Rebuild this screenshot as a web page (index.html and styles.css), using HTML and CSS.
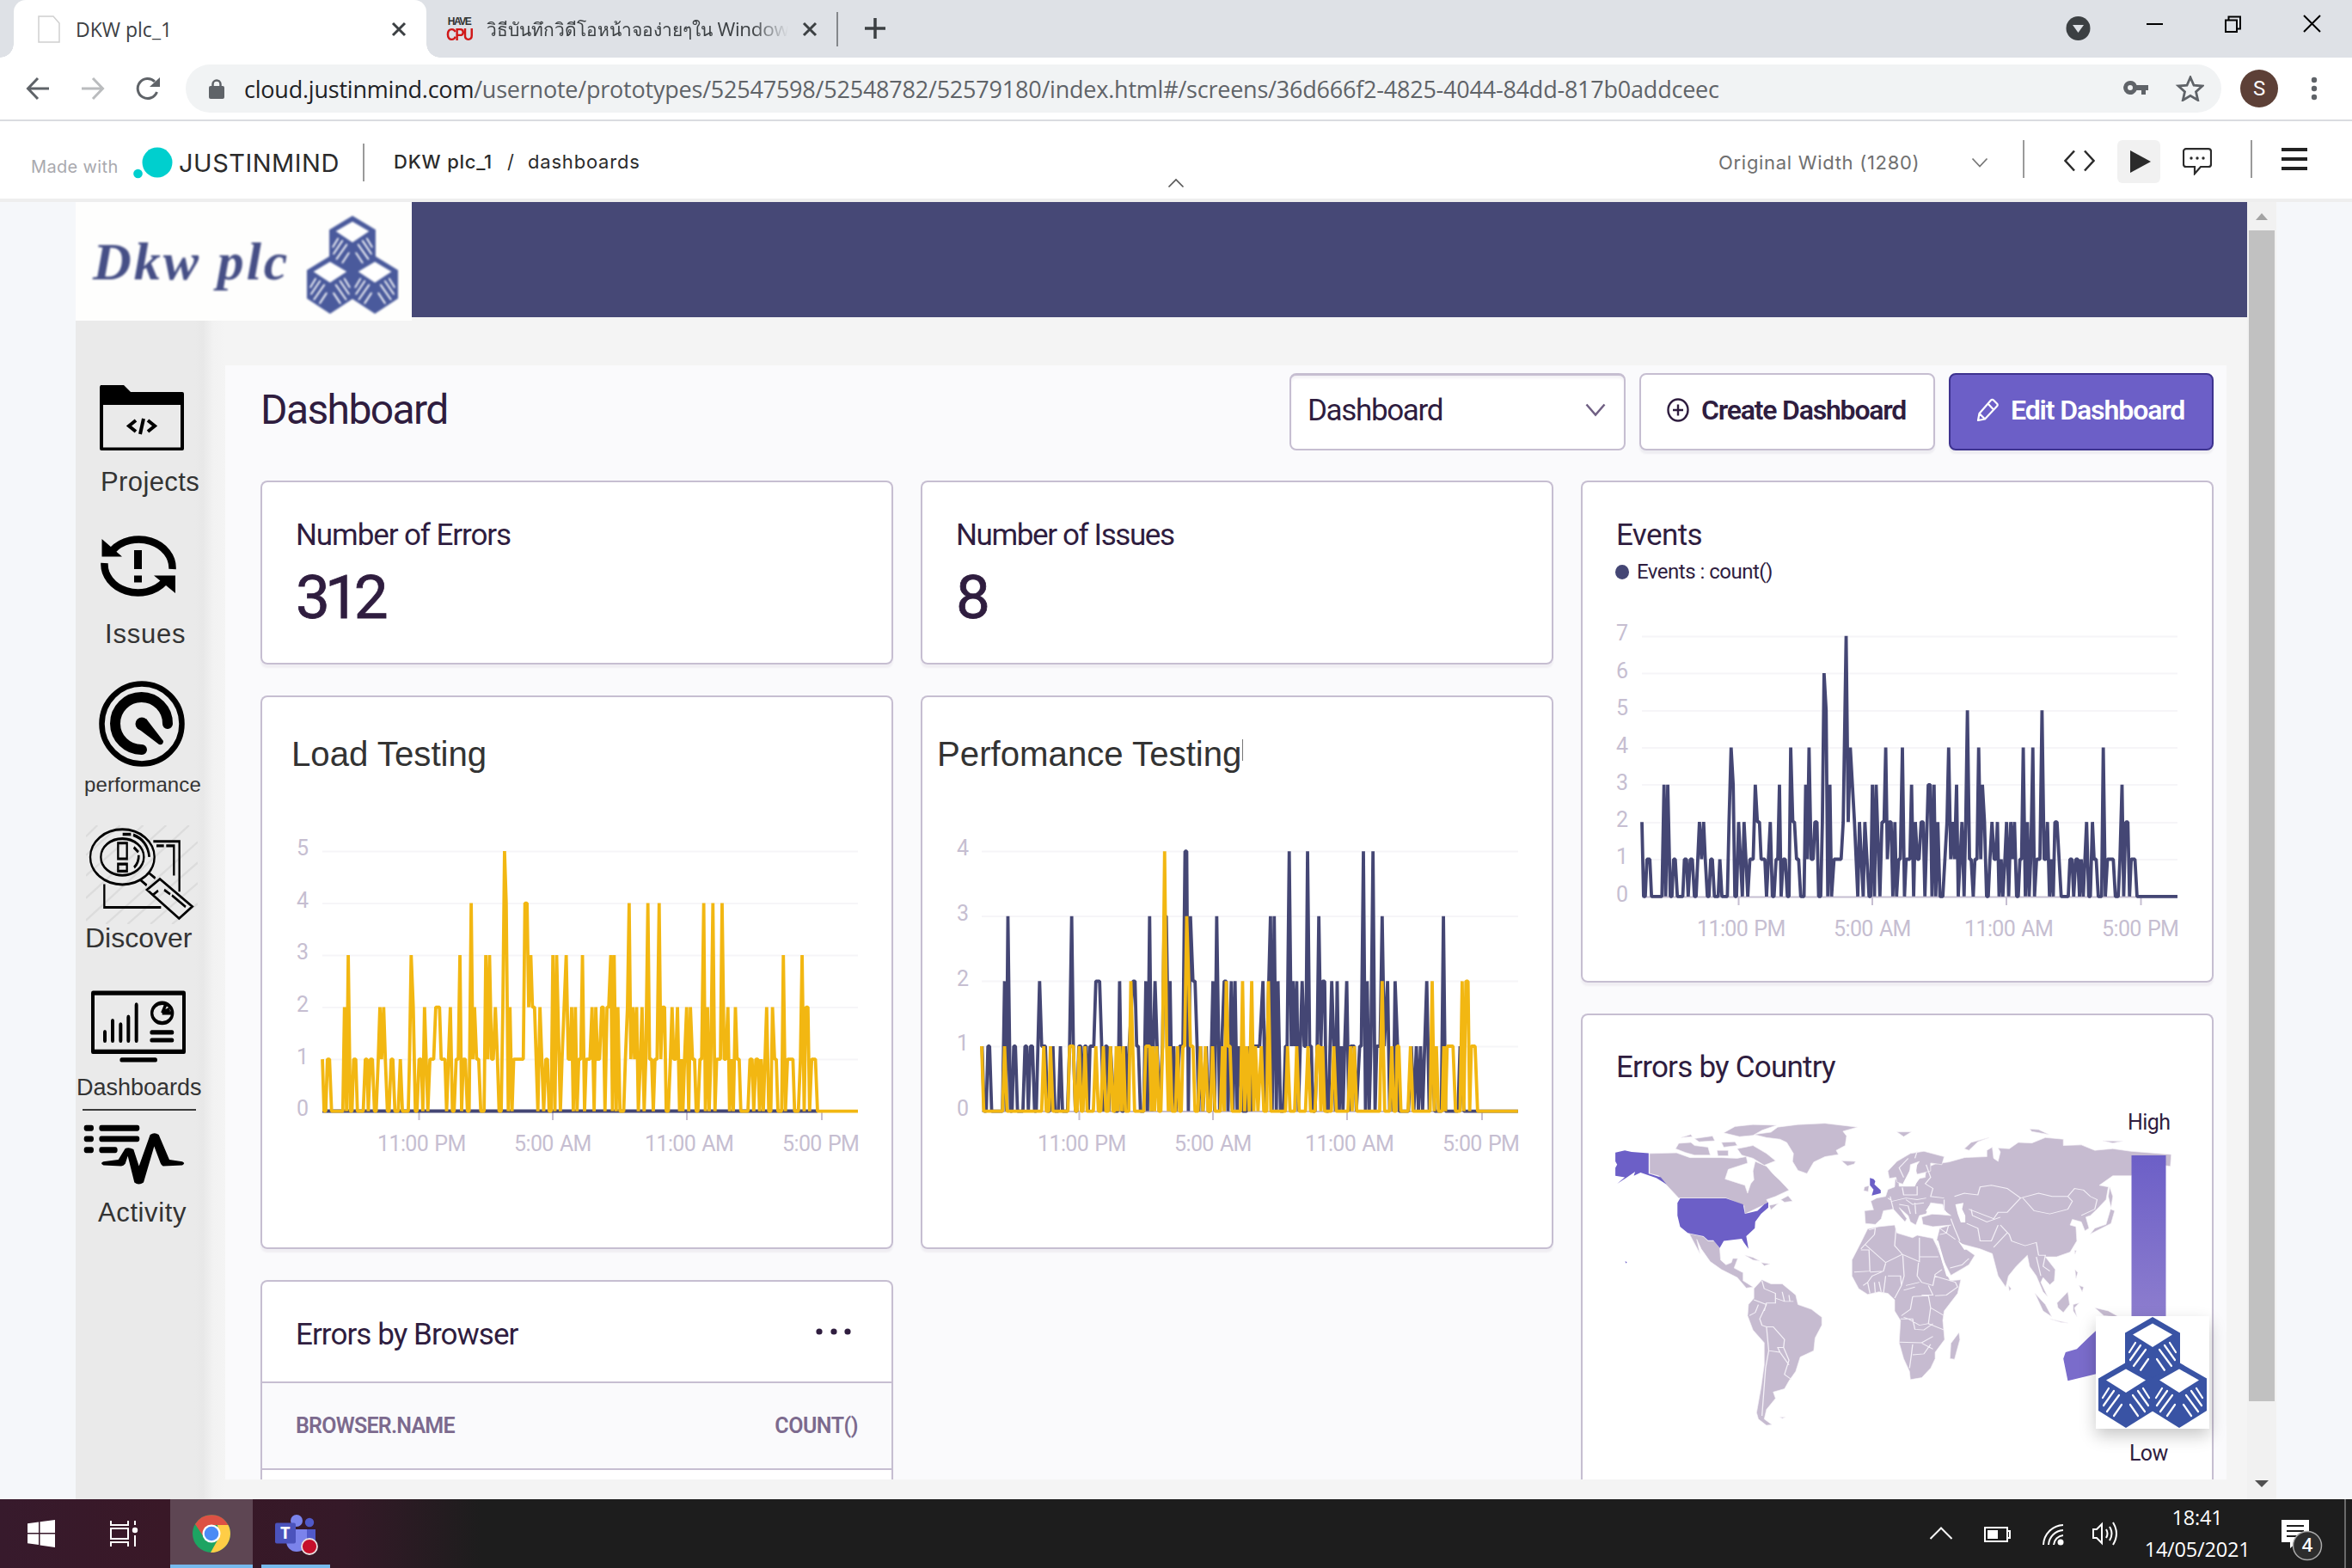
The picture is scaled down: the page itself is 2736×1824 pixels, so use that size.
FILE: index.html
```html
<!DOCTYPE html>
<html lang="en">
<head>
<meta charset="utf-8">
<title>DKW plc_1</title>
<link rel="stylesheet" href="styles.css">
</head>
<body>
<svg class="defs" width="0" height="0">
  <defs>
    <symbol id="cube" viewBox="0 0 64 76" overflow="visible">
      <path d="M32 0 64 18.500V56L32 76 0 56V18.500Z" fill="currentColor"/>
      <path d="M32 7.500 55 20.500 32 35 9 20.500Z" fill="#fff"/>
      <path d="M5 41 12 30M6 50 18 33M10 57 24 38M18 62 27 49M59 41 52 30M58 50 46 33M54 57 40 38M46 62 37 49" stroke="#fff" stroke-width="2.200" stroke-linecap="round"/>
    </symbol>
    <symbol id="cubes" viewBox="0 0 126 129">
      <use href="#cube" x="31" y="0" width="64" height="76"/>
      <use href="#cube" x="0" y="53" width="64" height="76"/>
      <use href="#cube" x="62" y="53" width="64" height="76"/>
    </symbol>
    <linearGradient id="heat" x1="0" y1="0" x2="0" y2="1"><stop offset="0" stop-color="#6c5fc7"/><stop offset="1" stop-color="#a08fd2"/></linearGradient>
  </defs>
</svg>

<header class="tabs">
  <div class="tab tab-active">
    <svg class="tab-doc" width="26" height="32" viewBox="0 0 26 32"><path d="M1 1H18L25 9V31H1Z" fill="#fff" stroke="#d0d0d0" stroke-width="1.500"/></svg>
    <span class="tab-name">DKW plc_1</span>
    <svg class="tab-x" width="18" height="18" viewBox="0 0 18 18"><path d="M2 2 16 16M16 2 2 16" stroke="#3c4043" stroke-width="3"/></svg>
  </div>
  <div class="tab tab-other">
    <div class="fav"><span>HAVE</span><b>CPU</b></div>
    <span class="tab-thai">วิธีบันทึกวิดีโอหน้าจอง่ายๆใน <em>Window</em></span>
    <svg class="tab-x2" width="18" height="18" viewBox="0 0 18 18"><path d="M2 2 16 16M16 2 2 16" stroke="#3c4043" stroke-width="3"/></svg>
  </div>
  <i class="tab-sep"></i>
  <svg class="tab-plus" width="24" height="24" viewBox="0 0 24 24"><path d="M12 0V24M0 12H24" stroke="#3c4043" stroke-width="3.500"/></svg>
  <svg class="win" width="284" height="40" viewBox="0 0 284 40">
    <circle cx="14.500" cy="23" r="14" fill="#3c4043"/><path d="M8 19H21L14.500 28Z" fill="#dee1e6"/>
    <path d="M94 18H113" stroke="#000" stroke-width="2"/>
    <path d="M186 13.500H199V27H186ZM189.500 13V9.500H203V23.500H199" fill="none" stroke="#000" stroke-width="2"/>
    <path d="M277 8 296 27M296 8 277 27" stroke="#000" stroke-width="2"/>
  </svg>
</header>

<nav class="toolbar">
  <svg class="nav-icons" width="156" height="30" viewBox="0 0 156 30">
    <path d="M27 15H3M14 3 2.500 15 14 27" fill="none" stroke="#5f6368" stroke-width="3"/>
    <path d="M65 15H89M78 3 89.500 15 78 27" fill="none" stroke="#babcbe" stroke-width="3"/>
    <path d="M150 7A11.500 11.500 0 1 0 152.500 19" fill="none" stroke="#5f6368" stroke-width="3"/><path d="M156 2V13H144Z" fill="#5f6368"/>
  </svg>
  <div class="omnibox">
    <svg width="18" height="23" viewBox="0 0 18 23"><rect y="8" width="18" height="15" rx="2" fill="#5f6368"/><path d="M4.500 9V6a4.500 4.500 0 0 1 9 0V9" fill="none" stroke="#5f6368" stroke-width="2.500"/></svg>
    <span class="url"><b>cloud.justinmind.com</b>/usernote/prototypes/52547598/52548782/52579180/index.html#/screens/36d666f2-4825-4044-84dd-817b0addceec</span>
    <svg class="omni-actions" width="94" height="30" viewBox="0 0 94 30">
      <path d="M8 6A8 8 0 1 0 15.500 17H21V22H26V17H29V11H15.500A8 8 0 0 0 8 6ZM8 11A3 3 0 1 1 8 17A3 3 0 1 1 8 11Z" fill="#5f6368" fill-rule="evenodd"/>
      <path d="M78 2 82 11.200 92 12 84.500 18.800 86.700 28.500 78 23.300 69.300 28.500 71.500 18.800 64 12 74 11.200Z" fill="none" stroke="#5f6368" stroke-width="2.800"/>
    </svg>
  </div>
  <span class="avatar">S</span>
  <svg class="kebab" width="8" height="28" viewBox="0 0 8 28"><g fill="#5f6368"><circle cx="4" cy="4" r="3.200"/><circle cx="4" cy="14" r="3.200"/><circle cx="4" cy="24" r="3.200"/></g></svg>
</nav>

<div class="jm">
  <span class="made">Made with</span>
  <svg class="jm-dots" width="46" height="38" viewBox="0 0 46 38"><circle cx="28" cy="18" r="17.500" fill="#00cfce"/><circle cx="5.500" cy="31" r="5.300" fill="#00cfce"/></svg>
  <span class="jm-name">JUSTINMIND</span>
  <i class="rule rule-a"></i>
  <span class="crumb"><b>DKW plc_1</b></span>
  <span class="slash">/</span>
  <span class="crumb2">dashboards</span>
  <svg class="collapse" width="20" height="12" viewBox="0 0 20 12"><path d="M1.500 10.500 10 2 18.500 10.500" fill="none" stroke="#555" stroke-width="1.600"/></svg>
  <span class="width-pick">Original Width (1280)</span>
  <svg class="width-chev" width="20" height="12" viewBox="0 0 20 12"><path d="M1.500 1.500 10 10.500 18.500 1.500" fill="none" stroke="#777" stroke-width="1.800"/></svg>
  <i class="rule rule-b"></i>
  <svg class="code" width="36" height="26" viewBox="0 0 36 26"><path d="M12 1.500 1.500 13 12 24.500M24 1.500 34.500 13 24 24.500" fill="none" stroke="#2b2b2b" stroke-width="2.500"/></svg>
  <span class="play"><svg width="24" height="26" viewBox="0 0 24 26"><path d="M0 0 24 13 0 26Z" fill="#2b2b2b"/></svg></span>
  <svg class="comment" width="34" height="32" viewBox="0 0 34 32"><path d="M4 1.200H30a3 3 0 0 1 3 3V19a3 3 0 0 1-3 3H21L14 30V22H4a3 3 0 0 1-3-3V4.200a3 3 0 0 1 3-3Z" fill="none" stroke="#2b2b2b" stroke-width="2.200"/><g fill="#2b2b2b"><circle cx="10" cy="12" r="1.700"/><circle cx="17" cy="12" r="1.700"/><circle cx="24" cy="12" r="1.700"/></g></svg>
  <i class="rule rule-c"></i>
  <svg class="menu" width="30" height="26" viewBox="0 0 30 26"><path d="M0 2H30M0 13H30M0 24H30" stroke="#222" stroke-width="4"/></svg>
</div>

<main class="stage">
  <div class="app">
    <div class="banner">
      <div class="logo"><span>Dkw plc</span><svg width="106" height="114" preserveAspectRatio="none" viewBox="0 0 126 129"><use href="#cubes" width="126" height="129"/></svg></div>
      <div class="bar"></div>
    </div>
    <div class="body">
      <aside class="side">
        <svg class="i-projects" width="98" height="76" viewBox="0 0 98 76"><path d="M1 0H28L36 8H96q2 0 2 2V74q0 2-2 2H2q-2 0-2-2V2ZM4 23V72.500H94V23Z" fill-rule="evenodd"/><path d="M42 41 34 47.500 42 54M56 41 64 47.500 56 54" fill="none" stroke="#000" stroke-width="4"/><path d="M51 39 47 57" stroke="#000" stroke-width="4"/></svg>
        <span class="lb lb-projects">Projects</span>
        <svg class="i-issues" width="88" height="75" viewBox="0 0 88 75"><path d="M14 19A39 33 0 0 1 83.500 41" fill="none" stroke="#000" stroke-width="8.500"/><path d="M4.500 34A39 33 0 0 0 74 56" fill="none" stroke="#000" stroke-width="8.500"/><path d="M1.500 6V26.500H25ZM87 69V48.500H62ZM39 19H48V41H39ZM39 48.500H48V56.500H39Z"/></svg>
        <span class="lb lb-issues">Issues</span>
        <svg class="i-perf" width="102" height="100" viewBox="0 0 102 100"><circle cx="51" cy="50" r="46.500" fill="none" stroke="#000" stroke-width="6.500"/><path d="M81 50A30.500 30.500 0 1 0 51 80" fill="none" stroke="#000" stroke-width="12" stroke-linecap="round"/><circle cx="51" cy="50" r="7.500"/><path d="M56 44 76 70Q76 75 71 74L46 55Z"/></svg>
        <span class="lb lb-perf">performance</span>
        <svg class="i-disc" width="130" height="115" viewBox="120 415 390 265" preserveAspectRatio="none">
          <g stroke="#dcdcdc" stroke-width="6"><path d="M120 445 160 415M120 495 240 415M120 550 320 415M120 610 400 415M120 670 480 415M190 680 510 460M265 680 510 515M345 680 510 570M420 680 510 625"/></g>
          <g fill="none" stroke="#000" stroke-width="7"><ellipse cx="247" cy="500" rx="112" ry="74"/><ellipse cx="247" cy="500" rx="75" ry="49"/><path d="M355 458H446V593M427 550V470H400M366 470H392M184 573V635H382M232 463H263V505H232ZM232 519H263V538H232ZM378 559 491 633 445 665 333 588ZM337 541 362 557M308 560 332 576M352 603 372 590M420 603 468 634M393 588 414 600" /><path d="M285 441Q335 455 341 500M248 439H277M304 495Q305 515 288 528M287 474 303 487" stroke-width="8"/></g>
        </svg>
        <span class="lb lb-disc">Discover</span>
        <svg class="i-dash" width="110" height="84" viewBox="138 858 330 194" preserveAspectRatio="none">
          <g fill="none" stroke="#000" stroke-width="10" stroke-linejoin="round"><rect x="144" y="865" width="318" height="158" stroke-width="12"/><path d="M186 970V993M213 940V993M241 950V993M268 930V993M296 897V993M349 971H421M349 992H421M244 1045H363" stroke-width="12" stroke-linecap="round"/><ellipse cx="386" cy="919" rx="36" ry="27"/><path d="M386 919 398 897M386 919H418M386 919 412 908"/></g>
        </svg>
        <span class="lb lb-dash">Dashboards</span>
        <i class="side-line"></i>
        <svg class="i-act" width="118" height="70" viewBox="110 1218 354 162" preserveAspectRatio="none">
          <path d="M120 1228H138M120 1257H138M120 1287H138M173 1228H298M173 1257H298M173 1287H221" fill="none" stroke="#000" stroke-linecap="round" stroke-width="16"/>
          <path d="M180 1318 232 1313 256 1283Q268 1278 285 1285L304 1330 343 1246Q358 1237 373 1246L410 1313 455 1318Q468 1323 455 1328L388 1330Q382 1328 379 1322L357 1277 320 1374Q303 1384 288 1374L265 1303 256 1324Q250 1330 242 1330L180 1328Q166 1323 180 1318Z"/>
        </svg>
        <span class="lb lb-act">Activity</span>
      </aside>

      <section class="board">
        <div class="board-head">
          <h1>Dashboard</h1>
          <div class="select"><span>Dashboard</span><svg width="24" height="16" viewBox="0 0 24 16"><path d="M1.500 1.500 12 13.500 22.500 1.500" fill="none" stroke="#6f5f83" stroke-width="2.500"/></svg></div>
          <div class="btn btn-create"><svg width="26" height="28" viewBox="0 0 26 28"><ellipse cx="13" cy="14" rx="11.500" ry="12.500" fill="none" stroke="#2f1d3f" stroke-width="2.400"/><path d="M13 7.500V20.500M7 14H19" stroke="#2f1d3f" stroke-width="2.400"/></svg><span>Create Dashboard</span></div>
          <div class="btn btn-edit"><svg width="26" height="28" viewBox="0 0 26 28"><path d="M2 26 3.500 18 17 2.500Q18.500 1 20 2.500L24 6.500Q25.500 8 24 9.500L10 24.500ZM13.500 6.500 20 13.500M3.500 18 10 24.500" fill="none" stroke="#fff" stroke-width="2.200" stroke-linejoin="round"/></svg><span>Edit Dashboard</span></div>
        </div>
        <div class="cols">
          <div class="col">
            <article class="card card-num"><h2 class="t-errors">Number of Errors</h2><p class="big">312</p></article>
            <article class="card card-chart"><h3 class="t-load">Load Testing</h3>
              <svg class="chart" width="736" height="400">
                <path class="grid" d="M72 30.500H695M72 91H695M72 151.500H695M72 212H695M72 272.500H695"/>
                <path class="axis" d="M72 333H695M184.500 334V343M340 334V343M496 334V343M653 334V343"/>
                <g class="ylab"><text x="56" y="35">5</text><text x="56" y="96">4</text><text x="56" y="156">3</text><text x="56" y="217">2</text><text x="56" y="278">1</text><text x="56" y="338">0</text></g>
                <g class="xlab"><text x="136" y="379">11:00 PM</text><text x="295" y="379">5:00 AM</text><text x="447" y="379">11:00 AM</text><text x="607" y="379">5:00 PM</text></g>
                <path d="M72 332.600H648" stroke="#444674" stroke-width="4"/>
                <g transform="matrix(.4848 0 0 -60.500 -3.100 332.600)"><polyline class="line yellow" points="155,1 159,0 163,0 167,1 172,1 177,0 204,0 208,2 213,0 217,3 222,0 226,0 230,1 235,1 239,0 253,0 258,1 262,1 265,0 270,1 275,1 280,0 284,0 289,1 293,2 297,1 302,2 306,1 311,0 315,0 320,1 324,1 329,0 337,0 342,1 347,0 361,0 364,1 368,3 373,2 378,0 382,0 387,1 392,1 396,0 400,2 408,0 413,1 422,1 427,2 436,2 440,1 449,1 453,0 462,2 467,0 471,0 476,1 481,1 485,3 489,0 493,1 498,1 503,0 507,0 512,4 516,1 520,2 525,1 530,1 535,0 543,0 547,3 552,1 556,3 561,1 565,1 570,2 575,1 579,0 584,0 588,2 592,5 596,4 601,0 605,2 610,0 614,1 637,1 641,4 646,4 650,2 655,3 659,2 664,2 668,1 672,0 677,2 686,0 691,1 695,1 699,0 704,0 708,3 713,0 717,3 726,0 730,1 735,2 740,3 745,1 749,1 753,2 757,0 762,2 766,0 770,1 775,1 779,3 784,0 788,1 797,1 802,2 807,0 811,2 815,1 820,1 825,2 829,2 833,0 838,2 842,2 847,3 851,0 855,3 860,0 864,2 869,0 878,0 882,1 887,2 891,4 895,1 900,2 904,1 909,2 913,0 918,1 922,2 927,0 931,1 936,4 940,1 945,1 949,0 953,1 958,1 963,4 967,1 971,2 976,2 980,0 985,0 990,1 994,2 998,1 1003,1 1007,2 1012,0 1016,1 1020,0 1024,1 1029,2 1034,0 1038,2 1043,1 1048,1 1052,0 1056,0 1061,1 1065,1 1070,4 1074,0 1079,2 1083,0 1087,1 1092,4 1097,0 1101,1 1110,1 1114,4 1119,1 1123,1 1128,2 1132,0 1137,1 1141,0 1146,2 1150,1 1155,1 1159,0 1176,0 1181,1 1186,1 1190,0 1195,1 1200,1 1204,0 1208,1 1213,0 1217,1 1221,2 1226,0 1231,0 1235,2 1240,1 1244,1 1248,0 1257,0 1261,3 1266,0 1271,1 1284,1 1288,0 1297,0 1302,1 1306,3 1311,0 1315,2 1320,2 1324,0 1329,1 1338,1 1343,0 1440,0"/></g>
              </svg>
            </article>
            <article class="card card-browser">
              <div class="browser-head"><h2 class="t-browser">Errors by Browser</h2><svg width="42" height="8" viewBox="0 0 42 8"><g fill="#2f1d3f"><circle cx="4" cy="4" r="3.600"/><circle cx="21" cy="4" r="3.600"/><circle cx="37" cy="4" r="3.600"/></g></svg></div>
              <div class="browser-cols"><span class="c-name">BROWSER.NAME</span><span class="c-count">COUNT()</span></div>
              <div class="browser-row"></div>
            </article>
          </div>
          <div class="col">
            <article class="card card-num"><h2 class="t-issues">Number of Issues</h2><p class="big">8</p></article>
            <article class="card card-chart"><h3 class="t-perf">Perfomance Testing<i></i></h3>
              <svg class="chart" width="736" height="400">
                <path class="grid" d="M71 30.500H695M71 106H695M71 181.500H695M71 257.500H695"/>
                <path class="axis" d="M71 333H695M184.500 334V343M340 334V343M496 334V343M653 334V343"/>
                <g class="ylab"><text x="56" y="35">4</text><text x="56" y="111">3</text><text x="56" y="187">2</text><text x="56" y="262">1</text><text x="56" y="338">0</text></g>
                <g class="xlab"><text x="136" y="379">11:00 PM</text><text x="295" y="379">5:00 AM</text><text x="447" y="379">11:00 AM</text><text x="607" y="379">5:00 PM</text></g>
                <g transform="matrix(.4848 0 0 -75.600 -11 332.600)">
                  <polyline class="line navy" points="170,1 175,0 180,0 184,1 188,1 193,0 219,0 224,2 228,0 232,3 238,0 242,0 246,1 250,1 255,0 268,0 273,1 277,1 281,0 286,1 291,1 296,0 300,0 304,1 308,2 313,1 322,1 327,0 332,0 340,1 345,0 353,0 358,1 363,0 375,0 380,1 385,3 389,1 394,0 398,0 402,1 407,1 411,0 416,1 420,1 425,0 429,1 438,1 443,2 452,2 457,1 461,0 466,1 470,1 474,0 478,1 487,0 496,0 500,2 505,0 510,0 514,1 518,0 523,1 532,2 537,2 541,1 545,1 550,0 558,0 563,2 567,0 572,3 577,0 581,1 585,2 590,1 595,0 603,1 607,3 612,3 617,1 621,2 626,0 630,1 635,0 644,1 652,1 657,4 661,4 665,0 670,3 676,2 681,2 686,1 690,0 694,1 700,0 708,1 713,0 717,0 724,2 728,0 733,3 740,0 745,1 751,2 756,2 760,0 768,2 772,0 777,2 782,0 786,1 795,0 805,0 810,1 815,0 819,1 826,1 836,1 844,2 850,0 862,3 866,0 871,3 876,0 880,2 886,0 893,0 898,1 902,1 907,4 912,1 916,2 920,1 925,2 929,0 938,2 943,1 947,1 951,4 956,1 960,1 964,0 969,0 974,1 978,3 983,1 987,2 992,2 996,0 1001,0 1005,1 1009,2 1014,1 1018,0 1022,2 1027,0 1032,1 1036,0 1040,1 1045,2 1050,0 1054,1 1063,1 1068,0 1076,1 1080,1 1085,4 1090,0 1094,2 1099,0 1103,1 1108,4 1113,0 1117,1 1125,1 1130,3 1135,1 1143,2 1148,0 1152,1 1157,0 1161,2 1167,1 1171,0 1193,0 1200,1 1206,0 1212,1 1217,0 1222,1 1227,0 1232,1 1237,2 1243,0 1250,1 1256,0 1272,0 1277,3 1282,0 1312,0 1317,1 1326,0 1456,0"/>
                  <polyline class="line yellow" points="169,1 174,0 219,0 224,1 230,0 313,0 318,1 324,0 330,0 334,1 340,0 376,0 380,1 389,1 394,0 398,0 403,1 408,0 412,0 417,1 422,0 437,0 443,1 449,0 455,0 461,1 467,0 473,0 478,1 484,0 488,0 492,1 496,0 500,1 505,0 509,1 514,0 522,0 527,2 536,0 558,0 563,1 572,1 576,0 580,1 584,0 589,1 594,0 599,0 603,1 608,4 613,1 617,0 621,1 626,0 634,0 639,1 644,0 648,0 652,1 656,1 661,3 666,2 670,1 676,1 681,0 688,0 694,1 700,0 706,1 712,0 718,0 723,1 729,0 742,0 747,1 751,0 756,2 760,1 765,1 770,0 790,0 795,2 800,0 805,1 811,0 817,2 822,0 826,1 832,0 840,1 846,0 853,0 857,2 863,0 898,0 903,1 909,0 920,0 925,1 931,0 946,0 952,1 958,0 969,0 974,1 979,1 983,0 987,1 992,0 1008,0 1014,1 1020,0 1048,0 1054,1 1058,0 1063,1 1069,0 1124,0 1130,2 1136,0 1148,0 1153,1 1158,0 1163,0 1166,1 1170,1 1175,0 1192,0 1198,1 1204,0 1245,0 1250,2 1255,0 1260,1 1265,0 1274,0 1278,1 1282,0 1286,1 1300,1 1306,0 1317,0 1322,2 1326,0 1331,2 1336,2 1340,0 1344,1 1353,1 1359,0 1456,0"/>
                </g>
              </svg>
            </article>
          </div>
          <div class="col">
            <article class="card card-events"><h2 class="t-events">Events</h2>
              <p class="legend"><i></i><span>Events : count()</span></p>
              <svg class="chart" width="736" height="400">
                <path class="grid" d="M71 30.500H694M71 73.500H694M71 117H694M71 160H694M71 203H694M71 247H694M71 290H694"/>
                <path class="axis" d="M71 333.500H694M183.500 334V343M339 334V343M495 334V343M651.500 334V343"/>
                <g class="ylab"><text x="55" y="35">7</text><text x="55" y="79">6</text><text x="55" y="122">5</text><text x="55" y="166">4</text><text x="55" y="209">3</text><text x="55" y="252">2</text><text x="55" y="295">1</text><text x="55" y="339">0</text></g>
                <g class="xlab"><text x="135" y="379">11:00 PM</text><text x="294" y="379">5:00 AM</text><text x="446" y="379">11:00 AM</text><text x="606" y="379">5:00 PM</text></g>
                <g transform="matrix(.4848 0 0 -43.300 -9 332.800)"><polyline class="line navy" points="165,2 169,0 173,0 177,1 184,1 188,0 213,0 218,3 222,0 227,3 233,0 237,0 241,1 245,1 250,0 263,0 267,1 272,1 276,0 281,1 286,1 291,0 295,0 299,1 303,2 308,1 313,2 317,1 322,0 326,0 330,1 334,1 339,0 348,0 352,1 357,0 370,0 374,2 379,4 384,3 388,0 392,0 397,2 406,0 410,2 419,0 424,1 432,1 437,3 442,2 447,2 451,1 460,1 464,0 473,2 478,0 482,0 487,1 491,1 495,3 499,0 504,1 509,1 514,0 518,0 522,4 527,2 531,2 536,1 541,1 546,0 554,0 558,3 562,1 566,4 571,1 576,1 580,2 585,2 589,0 594,0 598,2 602,6 607,5 611,0 616,3 620,0 626,1 643,1 648,2 655,7 660,2 665,4 670,3 675,2 683,0 687,2 696,0 700,2 705,1 710,0 714,0 718,3 723,0 727,3 736,0 741,2 746,2 750,4 754,1 758,2 763,2 767,0 772,2 776,0 781,1 785,1 790,4 795,0 799,1 808,1 812,3 817,0 821,2 826,1 830,1 835,2 840,2 844,0 852,3 857,3 861,0 866,3 870,0 875,2 880,0 887,0 892,1 897,2 901,4 906,1 911,2 915,1 920,3 924,0 933,2 938,0 942,2 946,5 951,1 955,1 960,0 964,1 969,1 973,4 978,1 982,3 987,2 992,0 996,0 1000,1 1005,2 1010,1 1014,1 1018,2 1022,0 1027,1 1031,0 1036,1 1040,2 1045,0 1050,2 1054,1 1059,2 1064,0 1068,0 1072,1 1076,1 1080,4 1085,0 1090,2 1094,0 1098,1 1103,4 1107,0 1112,1 1120,1 1125,5 1130,1 1134,1 1138,2 1143,0 1148,1 1152,0 1156,2 1161,2 1166,1 1171,0 1188,0 1192,1 1197,1 1201,0 1206,1 1211,1 1215,0 1219,1 1224,0 1228,1 1232,2 1237,0 1241,0 1246,2 1250,1 1255,1 1260,0 1268,0 1272,4 1277,0 1282,1 1296,1 1301,0 1308,0 1312,1 1317,3 1321,0 1326,2 1331,2 1335,0 1339,1 1348,1 1353,0 1450,0"/></g>
              </svg>
            </article>
            <article class="card card-map"><h2 class="t-country">Errors by Country</h2>
              <svg class="map" width="736" height="459">
                <svg x="38" y="41" width="654" height="362.500" viewBox="90 360 1250 980" preserveAspectRatio="none">
                  <g fill="#c6bbd0" stroke="#f6f3f8" stroke-width="1.500">
                    <path d="M402 405 440 398 455 382 500 374 560 370 632 382 600 395 608 410 605 440 585 455 590 468 560 475 535 492 520 528 500 518 488 490 490 465 475 430 460 420 430 415Z"/>
                    <path d="M170 465 230 463 260 478 330 478 365 480 385 475 388 495 345 515 338 545 360 555 382 565 388 590 395 560 402 548 400 520 405 490 430 505 445 530 460 550 480 580 450 600 430 610 434 620 382 655 380 630 340 605 235 605 205 560 190 535 170 528Z"/>
                    <path d="M228 450 235 433 262 430 270 440 300 445 305 470 270 470 250 462ZM270 418 310 410 315 425 280 428ZM335 400 360 380 400 374 452 376 420 392 400 408 370 412ZM330 430 360 428 365 440 335 445ZM365 450 400 440 430 465 450 488 425 502 400 480 375 470ZM320 455 345 455 345 472 322 472ZM240 415 262 405 265 412ZM462 610 478 598 488 615 470 618ZM436 628 456 622 440 642Z"/>
                    <path d="M258 716 290 726 300 740 314 740 326 762 328 800 340 815 352 808 355 795 366 795 358 825 378 840 378 865 400 885 385 888 365 855 330 830 305 805 285 765 275 735 282 780Z"/>
                    <path d="M382 785 400 792 415 803 400 800ZM418 808 438 812 425 818Z"/>
                    <path d="M420 862 440 875 465 875 495 910 500 940 530 955 553 980 553 1005 538 1045 535 1085 505 1105 495 1150 480 1180 470 1205 445 1215 450 1235 430 1270 425 1300 442 1318 430 1320 412 1300 408 1280 418 1200 425 1130 425 1060 400 1020 388 975 390 940 402 920 402 890Z"/>
                    <path d="M655 702 680 695 715 690 720 715 755 730 765 722 800 732 815 775 822 810 838 865 862 862 855 905 825 960 822 990 826 1050 805 1090 805 1110 795 1140 775 1170 750 1176 748 1150 735 1110 725 1060 728 990 715 960 715 925 700 905 680 900 655 908 635 890 620 850 620 800 640 745Z"/>
                    <path d="M858 1028 860 1050 848 1112 838 1110 840 1062Z"/>
                    <path d="M648 645 668 642 662 615 675 605 695 600 700 578 715 570 716 545 724 550 725 568 760 568 765 545 783 540 785 510 805 498 835 492 870 478 920 475 920 455 932 445 935 480 945 490 950 460 945 448 970 450 990 430 1020 432 1050 415 1090 420 1090 440 1130 438 1160 455 1200 450 1240 458 1330 468 1328 505 1300 500 1240 535 1200 535 1170 565 1190 570 1185 610 1165 640 1150 660 1140 665 1147 700 1138 708 1130 680 1110 672 1105 690 1118 695 1120 740 1105 775 1075 790 1050 790 1072 830 1070 865 1060 878 1045 855 1040 870 1055 915 1045 900 1030 850 1015 820 1010 785 985 820 968 850 962 885 945 850 932 780 905 765 865 750 873 765 893 785 880 815 840 848 812 770 808 740 815 700 840 690 800 695 778 688 775 665 800 655 840 660 825 645 822 625 795 620 785 655 770 660 762 690 750 680 745 660 725 635 742 670 738 680 712 640 690 645 685 670 672 688 650 685Z"/>
                    <path d="M700 520 720 490 750 465 780 458 825 475 820 500 795 495 795 520 765 530 760 510 770 490 750 500 748 530 735 562 720 555 718 540 703 543Z"/>
                    <path d="M648 570 658 566 656 585 646 582ZM597 488 628 490 625 498 610 504ZM1193 570 1200 600 1196 635 1190 600ZM1195 640 1204 645 1196 685 1175 700 1150 718 1160 700 1185 688ZM870 450 885 430 925 415 900 428 880 455ZM720 397 752 397 735 412ZM1015 388 1035 390 1058 405 1020 396ZM1178 425 1222 426 1200 432ZM1027 905 1050 940 1064 978 1045 960ZM1060 985 1100 998 1085 996ZM1076 935 1100 900 1104 940 1090 965 1078 950ZM1112 940 1125 935 1115 950 1120 978 1112 960ZM1115 770 1119 770 1116 782ZM1116 830 1122 840 1118 858ZM1125 880 1135 885 1132 900ZM1160 950 1190 960 1215 980 1180 975ZM968 880 974 890 970 898ZM460 1294H472L465 1298Z"/>
                  </g>
                  <g fill="#fff"><path d="M850 625 868 620 865 640 872 660 872 682 862 682 855 655ZM784 645 792 628 825 640 833 655 800 656ZM733 560 755 500 765 500 762 530 775 535 760 565 740 568ZM806 735 812 740 836 855 830 850ZM855 738 880 765 870 768Z"/></g>
                  <g fill="none" stroke="#f4f0f7" stroke-width="2.500">
                    <path d="M658 705 672 700 670 720 640 765M640 768 658 768 660 835 625 838M650 752 695 808 732 782 715 755 718 700M732 782 770 805 770 730M770 790 812 790M733 785 736 850 730 880M695 810 690 835 665 850 655 870M660 838 690 835M700 850 728 850 730 880 715 920M690 905 695 850M768 808 765 850 775 870 800 880 805 845 820 830M740 880 770 870M735 895 760 885M775 910 800 910 790 880M803 850 850 870 855 885 830 910 805 912M755 915 790 912 795 950 790 1000 770 1005 745 985 735 980M755 915 750 955 730 975M728 985 755 985 760 1018 780 1020 800 1000M795 950 825 975M790 1000 825 1020M725 1058 775 1060 800 1040M755 1065 752 1100 748 1140M755 1098 780 1095 795 1065M776 1062 800 1080M645 880 655 870 660 905M670 870 672 905M680 868 685 900"/>
                    <path d="M420 865 425 890 450 905 450 935 430 935 425 960M450 920 470 930 490 930M465 900 470 930M480 910 482 930M402 925 430 940 415 985 420 1005 430 1010 445 1010 470 1050 468 1075 480 1115 470 1160 485 1175M430 1010 435 1085 460 1090 455 1075 468 1075M460 1090 480 1130M435 1085 428 1140 420 1290M392 975 405 965 412 940"/>
                    <path d="M825 610 825 645M785 500 795 540 783 560 800 575 795 600 825 605M760 480 765 458M735 540 725 510 745 480M765 568 765 595 735 595 732 572M700 605 710 615 740 605 765 610 785 605M705 600 712 640M740 610 755 625 780 620M725 625 745 630 750 655M760 620 762 655M848 600 870 590 900 595 905 570 930 565 965 575 995 605 965 650 945 650 935 670 880 640M995 605 1035 590 1065 600 1100 600 1115 575 1135 580 1150 600 1165 610 1160 640 1130 660M1000 605 1025 645 1060 655 1100 640 1110 615 1100 600M885 640 888 660 920 680 950 665M950 690 970 720 975 740 1005 755 1030 745 1035 785M945 690 930 740 905 740 900 700 875 685M965 715 935 760M1035 785 1050 785 1045 820 1060 835M1030 790 1040 850M840 670 848 700 860 740M815 700 850 735M838 825 865 815 880 795M815 720 830 715 835 690"/>
                  </g>
                  <g fill="#6c5fc7">
                    <path d="M94 462 115 455 130 460 168 464 168 528 195 540 208 562 185 542 150 525 135 535 138 522 120 540 98 560 115 540 94 535 94 510 98 500 94 490Z"/>
                    <path d="M238 606 340 606 378 625 382 655 410 645 425 625 434 618 434 635 418 655 405 680 404 700 385 725 390 765 380 745 375 733 335 740 326 762 312 738 300 738 290 725 255 715 238 695 232 660 232 620Z"/>
                    <path d="M660 542 668 545 672 552 670 562 684 580 684 590 664 597 668 578 660 565ZM116 803 120 808 117 810Z"/>
                  </g>
                  <path d="M1240 1010 1200 1030 1163 1022 1145 1045 1120 1080 1095 1090 1090 1110 1100 1180 1163 1158 1240 1170Z" fill="#7a6ccb"/>
                </svg>
                <rect x="640.500" y="82" width="40" height="300" fill="url(#heat)"/>
                <g class="maplab"><text x="636" y="52">High</text><text x="638" y="437">Low</text></g>
              </svg>
            </article>
          </div>
        </div>
        <div class="float"><svg width="126" height="129"><use href="#cubes" width="126" height="129"/></svg></div>
      </section>
    </div>
  </div>
  <div class="scroll">
    <svg width="16" height="10" viewBox="0 0 16 10"><path d="M8 1 15 9H1Z" fill="#a3a3a3"/></svg>
    <i></i>
    <svg class="down" width="16" height="10" viewBox="0 0 16 10"><path d="M0 1H16L8 9Z" fill="#505050"/></svg>
  </div>
</main>

<footer class="taskbar">
  <svg class="tb-win" width="32" height="32" viewBox="0 0 32 32"><path d="M0 4.300 13 2.500V15H0ZM14.500 2.200 32 0V15H14.500ZM0 16.500H13V29L0 27.300ZM14.500 16.500H32V32L14.500 29.500Z" fill="#fff"/></svg>
  <svg class="tb-view" width="33" height="30" viewBox="0 0 33 30"><path d="M1 0V5H21V0M1 9H21V21H1ZM1 30V25H21V30M29 0V5M29 17V30" fill="none" stroke="#fff" stroke-width="2"/><circle cx="29" cy="11" r="3.200" fill="#fff"/></svg>
  <div class="tb-app tb-chrome"><svg width="46" height="46" viewBox="0 0 46 46"><circle cx="23" cy="23" r="22" fill="#1da462"/><path d="M4 12A22 22 0 0 1 42.500 13H23L14 27Z" fill="#dd5144"/><path d="M42.500 13A22 22 0 0 1 22 45L32 27 30 13Z" fill="#ffcd46"/><circle cx="23" cy="23" r="10.500" fill="#fff"/><circle cx="23" cy="23" r="8.300" fill="#4c8bf5"/></svg></div>
  <div class="tb-app tb-teams"><svg width="50" height="48" viewBox="0 0 50 48"><circle cx="40" cy="9" r="5.200" fill="#5059c9"/><path d="M34 17H47V31Q44 37 36 35Z" fill="#5059c9"/><circle cx="25" cy="7" r="7" fill="#7b83eb"/><path d="M13 17H37V31A12 12 0 0 1 13 31Z" fill="#7b83eb"/><rect y="9.500" width="24" height="24" rx="2" fill="#4b53bc"/><text x="6" y="28" class="teams-t">T</text><circle cx="40" cy="37" r="9" fill="#c50f2b" stroke="#e8e0e0" stroke-width="1.800"/></svg></div>
  <svg class="tray" width="222" height="32" viewBox="0 0 222 32">
    <g fill="none" stroke="#fff" stroke-width="2">
      <path d="M.5 22 13 9.500 25.500 22"/>
      <path d="M64 9H90V25H64ZM91 13H93V21H91"/>
      <path d="M132 29A24 24 0 0 1 155 6M138 29A18 18 0 0 1 155 12M144 29A12 12 0 0 1 155 18"/>
      <path d="M190 11H194L200 5V27L194 21H190ZM205 11Q208 16 205 21M209 8Q214 16 209 24M213 3Q221 16 213 29"/>
    </g>
    <rect x="67" y="12" width="12" height="10" fill="#fff"/><circle cx="152" cy="26" r="3.500" fill="#fff"/>
  </svg>
  <div class="clock"><span>18:41</span><span>14/05/2021</span></div>
  <div class="notify"><svg width="50" height="50" viewBox="0 0 50 50"><path d="M0 0H32V26H18L10 33V26H0Z" fill="#fff"/><path d="M6 7H26M6 13H26M6 19H20" stroke="#1e1e1e" stroke-width="2"/><circle cx="30" cy="30" r="16.500" fill="#2d2d2d" stroke="#aaa" stroke-width="1.500"/><text x="30" y="37" class="badge-n">4</text></svg></div>
  <i class="peek"></i>
</footer>
</body>
</html>
```
FILE: styles.css
```css
* { box-sizing: border-box; margin: 0; padding: 0; }
body { width: 2736px; height: 1824px; overflow: hidden; background: #fff; font-family: Roboto, sans-serif; display: flex; flex-direction: column; }
svg { display: block; flex: none; }
span { white-space: nowrap; }
i { display: block; flex: none; }
.defs { position: absolute; }

/* browser tabs */
.tabs { height: 67px; flex: none; background: #dee1e6; display: flex; align-items: flex-start; padding-left: 16px; font-family: "Open Sans", "Noto Sans", sans-serif; font-size: 23px; color: #3c4043; }
.tab { display: flex; height: 67px; align-items: center; }
.tab-active { width: 480px; background: #fff; border-radius: 14px 14px 0 0; padding-left: 28px; position: relative; }
.tab-active::before, .tab-active::after { content: ""; position: absolute; bottom: 0; width: 16px; height: 16px; }
.tab-active::before { left: -16px; background: radial-gradient(circle at 0 0, #dee1e6 15.5px, #fff 16px); }
.tab-active::after { right: -16px; background: radial-gradient(circle at 100% 0, #dee1e6 15.5px, #fff 16px); }
.tab-name { margin-left: 18px; width: 367px; letter-spacing: 0; }
.tab-other { padding-left: 24px; width: 477px; }
.fav { width: 28px; height: 32px; display: flex; flex-direction: column; align-items: center; font: bold 12px/14px "Liberation Sans", sans-serif; letter-spacing: -1.5px; color: #333; }
.fav b { font-size: 17px; line-height: 18px; color: #d01818; letter-spacing: -2px; transform: scaleY(1.15); }
.tab-thai { margin-left: 18px; width: 351px; line-height: 44px; font-size: 21px; -webkit-mask-image: linear-gradient(90deg, #000 88%, transparent); mask-image: linear-gradient(90deg, #000 88%, transparent); }
.tab-thai em { font-style: normal; font-size: 22.5px; letter-spacing: -0.3px; }
.tab-x2 { margin-left: 16px; }
.tab-sep { width: 2px; height: 40px; margin-top: 14px; background: #84878b; }
.tab-plus { margin: 21px 0 0 31px; }
.win { margin: 10px 49px 0 auto; overflow: visible; }

/* address bar */
.toolbar { height: 74px; flex: none; border-bottom: 2px solid #dadce0; display: flex; align-items: center; padding-left: 30px; }
.omnibox { margin-left: 30px; width: 2368px; height: 56px; border-radius: 28px; background: #f1f3f4; display: flex; align-items: center; padding-left: 27px; }
.url { margin-left: 23px; font: 27px "Open Sans", "Noto Sans", sans-serif; color: #5f6368; width: 2186px; letter-spacing: -0.22px; }
.url b { font-weight: 400; color: #202124; }
.avatar { margin-left: 22px; width: 44px; height: 44px; border-radius: 50%; background: #5d4037; color: #fff; font-size: 24px; line-height: 44px; text-align: center; }
.kebab { margin-left: 38px; }

/* viewer header */
.jm { height: 94px; flex: none; border-bottom: 4px solid #eee; display: flex; align-items: flex-start; font-family: Inter, sans-serif; color: #2b2b2b; padding-left: 36px; }
.made { width: 119px; margin-top: 40px; font-size: 20px; line-height: 26px; color: #a9a9ae; letter-spacing: 0.35px; }
.jm-dots { margin-top: 30px; }
.jm-name { margin: 31px 0 0 7px; width: 214px; font: 400 29px/36px Inter, sans-serif; letter-spacing: 0.5px; }
.rule { width: 2px; height: 44px; margin-top: 26px; background: #9a9a9a; }
.crumb { width: 132px; margin: 33px 0 0 34px; font-size: 22px; line-height: 28px; letter-spacing: 0.8px; }
.crumb b { font-weight: 500; }
.slash { width: 24px; margin-top: 33px; font-size: 22px; line-height: 28px; }
.crumb2 { width: 130px; margin-top: 33px; font-size: 22px; line-height: 28px; letter-spacing: 0.8px; }
.collapse { margin: 66px 0 0 614px; }
.width-pick { width: 234px; margin: 34px 0 0 621px; font-size: 22px; line-height: 28px; color: #707070; letter-spacing: 0.7px; }
.width-chev { margin: 42px 0 0 60px; }
.rule-b { margin: 22px 0 0 40px; }
.code { margin: 33px 0 0 46px; }
.play { margin: 22px 0 0 26px; width: 50px; height: 50px; border-radius: 6px; background: #f1f1f1; display: flex; align-items: center; padding-left: 15px; }
.comment { margin: 31px 0 0 26px; }
.rule-c { margin: 22px 0 0 45px; }
.menu { margin: 31px 0 0 34px; }

/* stage */
.stage { height: 1509px; flex: none; background: #f5f7fa; display: flex; padding-left: 88px; overflow: hidden; }
.app { width: 2526px; background: #f4f4f4; display: flex; flex-direction: column; }
.banner { display: flex; height: 138px; align-items: flex-start; }
.logo { width: 391px; height: 138px; background: #fefefd; display: flex; align-items: flex-start; padding: 16px 0 0 20px; }
.logo span { width: 249px; margin-top: 18px; font: italic bold 62px/70px "Liberation Serif", serif; color: #464f86; letter-spacing: 3px; filter: blur(1px); }
.logo svg { color: #4a5a9c; filter: blur(1px); }
.bar { flex: 1; height: 134px; background: #464876; }
.body { display: flex; flex: 1; }
.side { width: 174px; background: linear-gradient(90deg, #eaeaea 138px, #e8e8e8 148px, #f2f2f2 160px, #f4f4f4); display: flex; flex-direction: column; align-items: flex-start; font-family: "Liberation Sans", sans-serif; color: #333; }
.lb { line-height: 36px; font-size: 31px; }
.i-projects { margin: 75px 0 0 28px; }
.lb-projects { margin: 19px 0 0 29px; letter-spacing: 0.4px; }
.i-issues { margin: 42px 0 0 29px; }
.lb-issues { margin: 24px 0 0 34px; letter-spacing: 0.8px; }
.i-perf { margin: 36px 0 0 26px; }
.lb-perf { margin: 3px 0 0 10px; font-size: 24px; letter-spacing: 0.1px; }
.i-disc { margin: 29px 0 0 12px; }
.lb-disc { margin: -2px 0 0 11px; font-size: 32px; }
.i-dash { margin: 43px 0 0 18px; }
.lb-dash { margin: 11px 0 0 1px; font-size: 27px; }
.side-line { width: 132px; height: 2px; margin: 7px 0 0 8px; background: #3a3a3a; }
.i-act { margin: 16px 0 0 9px; }
.lb-act { margin: 15px 0 0 26px; letter-spacing: 0.6px; }

/* dashboard */
.board { position: relative; width: 2328px; height: 1296px; margin-top: 52px; background: #fafafc; overflow: hidden; color: #2f1d3f; }
.board-head { display: flex; align-items: flex-start; height: 134px; padding: 9px 0 0 41px; }
h1 { width: 1197px; margin-top: 15px; font-weight: 400; font-size: 48px; line-height: 56px; letter-spacing: -1.6px; }
.select { width: 391px; height: 90px; border: 2px solid #c6bed1; border-top-width: 3px; border-radius: 8px; background: #fff; display: flex; align-items: center; justify-content: space-between; padding: 0 21px 5px 19px; font-size: 35px; letter-spacing: -1.35px; box-shadow: inset 0 3px 3px #f3f1f5; }
.btn { height: 90px; border-radius: 8px; display: flex; align-items: center; padding-bottom: 4px; font-size: 32px; font-weight: 600; gap: 14px; }
.btn-create { width: 344px; margin-left: 16px; border: 2px solid #c6bed1; background: #fff; padding-left: 30px; box-shadow: 0 4px 2px #eeedf2; letter-spacing: -1.2px; }
.btn-edit { width: 308px; margin-left: 16px; border: 2px solid #3d328f; background: #6c5fc7; color: #fff; padding-left: 30px; box-shadow: 0 4px 2px #eeedf2; letter-spacing: -1.1px; }
.cols { display: flex; gap: 32px; padding-left: 41px; }
.col { width: 736px; display: flex; flex-direction: column; gap: 36px; }
.card { background: #fff; border-radius: 8px; box-shadow: inset 0 0 0 2px #c6bed1, 0 4px 2px #f0eef3; overflow: hidden; }
.card-num { height: 214px; padding: 44px 0 0 41px; }
.card-chart { height: 644px; }
.card-events { height: 584px; }
.card-map { height: 620px; }
h2 { font-weight: 400; font-size: 35px; line-height: 40px; white-space: nowrap; letter-spacing: -1.1px; }
.t-issues { letter-spacing: -1.4px; }
.t-browser { letter-spacing: -0.95px; }
.big { margin-top: 12px; font-size: 71px; line-height: 80px; letter-spacing: -6px; -webkit-text-stroke: 0.8px #2f1d3f; }
h3 { font: 400 40.2px/46px "Liberation Sans", sans-serif; color: #333; white-space: nowrap; padding-top: 46px; margin-bottom: 59px; }
.t-load { padding-left: 36px; }
.t-perf { padding-left: 19px; display: flex; }
.t-perf i { width: 1px; height: 25px; background: #777; margin-left: 1px; margin-top: 5px; }
.t-events { padding: 44px 0 0 41px; letter-spacing: -0.6px; }
.t-country { padding: 43px 0 0 41px; letter-spacing: -0.78px; }
.legend { display: flex; align-items: center; margin: 7px 0 30px 40px; font-size: 24px; line-height: 30px; letter-spacing: -0.5px; }
.legend i { width: 16px; height: 17px; border-radius: 50%; background: #444674; margin-right: 9px; }
.grid { fill: none; stroke: #f6f5f8; stroke-width: 2; }
.axis { fill: none; stroke: #c6bed1; stroke-width: 2; }
.ylab text { text-anchor: end; }
.ylab, .xlab { fill: #c6bed1; font-size: 25px; }
.xlab { letter-spacing: -0.6px; word-spacing: 1.5px; }
.line { fill: none; vector-effect: non-scaling-stroke; stroke-width: 3.8; stroke-linejoin: bevel; }
.yellow { stroke: #f2b712; }
.navy { stroke: #444674; }
.maplab { fill: #2f1d3f; font-size: 25px; letter-spacing: -0.6px; }
.card-browser { height: 260px; }
.browser-head { height: 118px; display: flex; justify-content: space-between; padding: 44px 48px 0 41px; }
.browser-head svg { margin-top: 12px; }
.browser-cols { height: 103px; margin: 0 2px; border: 0 solid #c6bed1; border-width: 2px 0; background: #fafafc; display: flex; justify-content: space-between; padding: 36px 39px 0; color: #7c6a8e; font-size: 25px; line-height: 28px; font-weight: 600; }
.c-name { letter-spacing: -0.75px; }
.c-count { letter-spacing: -0.5px; }
.float { position: absolute; left: 2176px; top: 1106px; width: 132px; height: 131px; background: #fff; padding: 1px 0 0 3px; color: #3953a4; box-shadow: 0 8px 18px rgba(0,0,0,.22); }

/* viewer scrollbar */
.scroll { width: 34px; background: #f1f1f1; display: flex; flex-direction: column; align-items: center; padding-top: 12px; }
.scroll i { width: 30px; height: 1362px; margin-top: 11px; background: #c1c1c1; }
.scroll .down { margin-top: 91px; }

/* taskbar */
.taskbar { height: 80px; flex: none; background: linear-gradient(90deg, #371a2c, #391827 190px, #351928 400px, #1d1d1d 560px); display: flex; align-items: flex-start; padding-left: 32px; color: #fff; }
.tb-win { margin-top: 24px; }
.tb-view { margin: 25px 37px 0 64px; }
.tb-app { height: 80px; border-bottom: 4px solid #76b9ed; }
.tb-chrome { width: 96px; background: #5e4653; padding: 17px 0 0 25px; }
.tb-teams { width: 80px; margin-left: 10px; padding: 18px 0 0 16px; }
.teams-t { font: bold 20px "Open Sans", sans-serif; fill: #fff; }
.tray { margin: 24px 0 0 1861px; overflow: visible; }
.clock { width: 120px; margin: 3px 0 0 29px; display: flex; flex-direction: column; align-items: center; font: 23.5px/37px "Open Sans", "Noto Sans", sans-serif; letter-spacing: -0.2px; }
.notify { margin: 24px 0 0 38px; }
.badge-n { font: 600 22px "Open Sans", sans-serif; fill: #fff; text-anchor: middle; }
.peek { width: 2px; height: 80px; margin-left: 23px; background: #6a6a6a; }
```
